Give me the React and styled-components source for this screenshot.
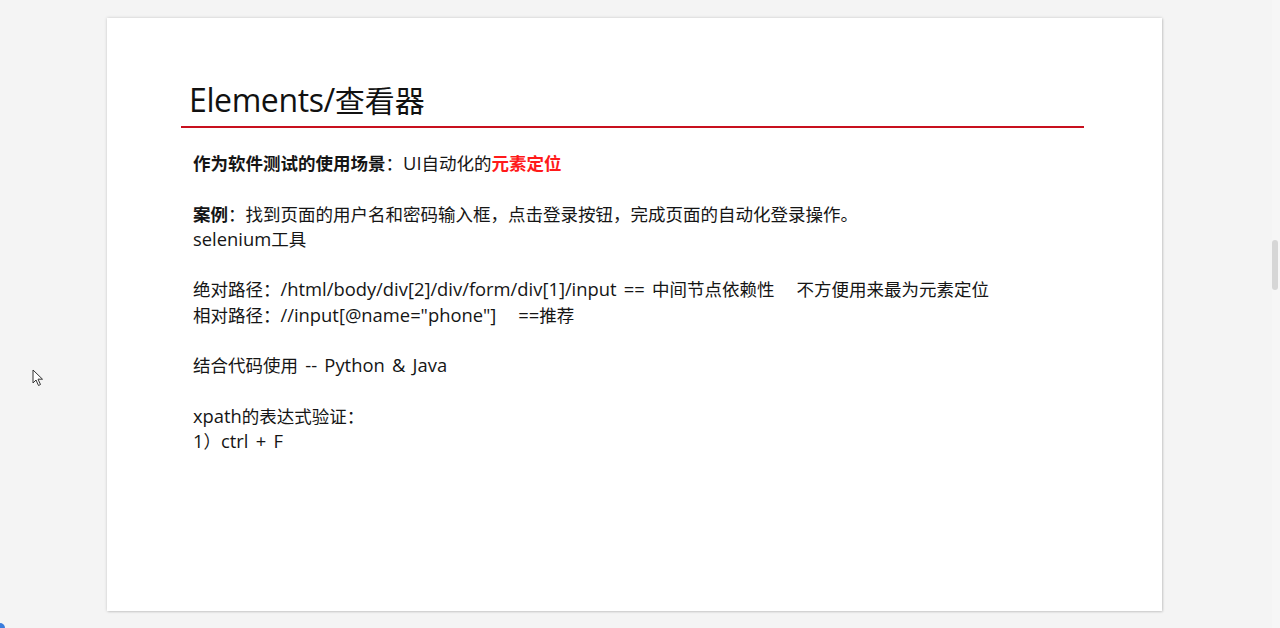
import { styled, createGlobalStyle } from "styled-components";

const Global = createGlobalStyle`
  html, body {
    margin: 0;
    padding: 0;
    background: #f4f4f4;
  }
  body {
    font-family: "Noto Sans CJK SC", "Open Sans", sans-serif;
  }
`;

const lines = [
  { key: "l1", parts: [{ t: "作为软件测试的使用场景", b: true }, { t: "：UI自动化的" }, { t: "元素定位", b: true, red: true }] },
  { key: "e1" },
  { key: "l2", parts: [{ t: "案例", b: true }, { t: "：找到页面的用户名和密码输入框，点击登录按钮，完成页面的自动化登录操作。" }] },
  { key: "l3", parts: [{ t: "selenium工具" }] },
  { key: "e2" },
  { key: "l4", parts: [{ t: "绝对路径：/html/body/div[2]/div/form/div[1]/input == 中间节点依赖性\u00a0\u00a0\u00a0不方便用来最为元素定位" }] },
  { key: "l5", parts: [{ t: "相对路径：//input[@name=\"phone\"]\u00a0\u00a0\u00a0==推荐" }] },
  { key: "e3" },
  { key: "l6", parts: [{ t: "结合代码使用 -- Python & Java" }] },
  { key: "e4" },
  { key: "l7", parts: [{ t: "xpath的表达式验证：" }] },
  { key: "l8", parts: [{ t: "1）ctrl + F" }] },
];

// latin runs are set a bit larger than the CJK glyphs, like Segoe UI next to YaHei
const split = (text) => text.split(/([\x20-\x7e\u00a0]+)/).filter(Boolean);

const Mixed = ({ text }) =>
  split(text).map((s, i) =>
    /^[\x20-\x7e\u00a0]+$/.test(s) ? <Latin key={i}>{s}</Latin> : <span key={i}>{s}</span>
  );

const App = () => {
  return (
    <Page>
      <Global />
      <Slide>
        <Title>
          <Mixed text="Elements/查看器" />
        </Title>
        <Rule />
        <Body>
          {lines.map((line) => (
            <Line key={line.key}>
              {line.parts
                ? line.parts.map((p, i) => (
                    <Part key={i} $bold={p.b} $red={p.red}>
                      <Mixed text={p.t} />
                    </Part>
                  ))
                : "\u00a0"}
            </Line>
          ))}
        </Body>
      </Slide>
      <Scrollbar>
        <Thumb />
      </Scrollbar>
      <Cursor viewBox="0 0 12 18" width="12" height="18">
        <path
          d="M1 1 L1 14 L4 11 L6.5 16.5 L8.5 15.5 L6 10.2 L10.5 10.2 Z"
          fill="#fff"
          stroke="#333"
          strokeWidth="1"
          strokeLinejoin="round"
        />
      </Cursor>
      <Dot />
    </Page>
  );
};

export default App;

const Page = styled.div`
  position: relative;
  height: 628px;
  overflow: hidden;
  padding: 18px 0 0 107px;
  box-sizing: border-box;
`;

const Slide = styled.div`
  width: 1055px;
  height: 593px;
  background: #ffffff;
  box-shadow: 0 0 3px rgba(0, 0, 0, 0.18), 1px 1px 2px rgba(0, 0, 0, 0.1);
  padding: 58px 0 0 74px;
  box-sizing: border-box;
`;

const Latin = styled.span`
  font-family: "Open Sans", sans-serif;
  font-size: 1.05em;
  word-spacing: 2.5px;
`;

const Title = styled.h1`
  margin: 0 0 0 8px;
  font-family: "Noto Sans CJK SC", sans-serif;
  font-weight: 400;
  font-size: 30px;
  line-height: 46px;
  height: 46px;
  color: #111;

  ${Latin} {
    font-size: 32px;
    letter-spacing: -0.4px;
  }
`;

const Rule = styled.div`
  width: 903px;
  height: 2px;
  margin-top: 4px;
  background: #c8101e;
`;

const Body = styled.div`
  margin: 22px 0 0 12px;
  font-size: 17.5px;
  line-height: 25.3px;
  color: #151515;
`;

const Line = styled.div`
  white-space: nowrap;
  height: 25.3px;
`;

const Part = styled.span`
  font-weight: ${(p) => (p.$bold ? 700 : 400)};
  color: ${(p) => (p.$red ? "#ff1a1a" : "inherit")};
`;

const Scrollbar = styled.div`
  position: absolute;
  right: 0;
  top: 0;
  width: 8px;
  height: 100%;
  background: #f6f6f6;
`;

const Thumb = styled.div`
  margin-top: 240px;
  width: 6px;
  height: 50px;
  border-radius: 3px;
  background: #d6d6d6;
`;

const Cursor = styled.svg`
  position: absolute;
  left: 32px;
  top: 369px;
`;

const Dot = styled.div`
  position: absolute;
  left: -5px;
  bottom: -5px;
  width: 10px;
  height: 10px;
  border-radius: 50%;
  background: #3b7ddd;
`;
